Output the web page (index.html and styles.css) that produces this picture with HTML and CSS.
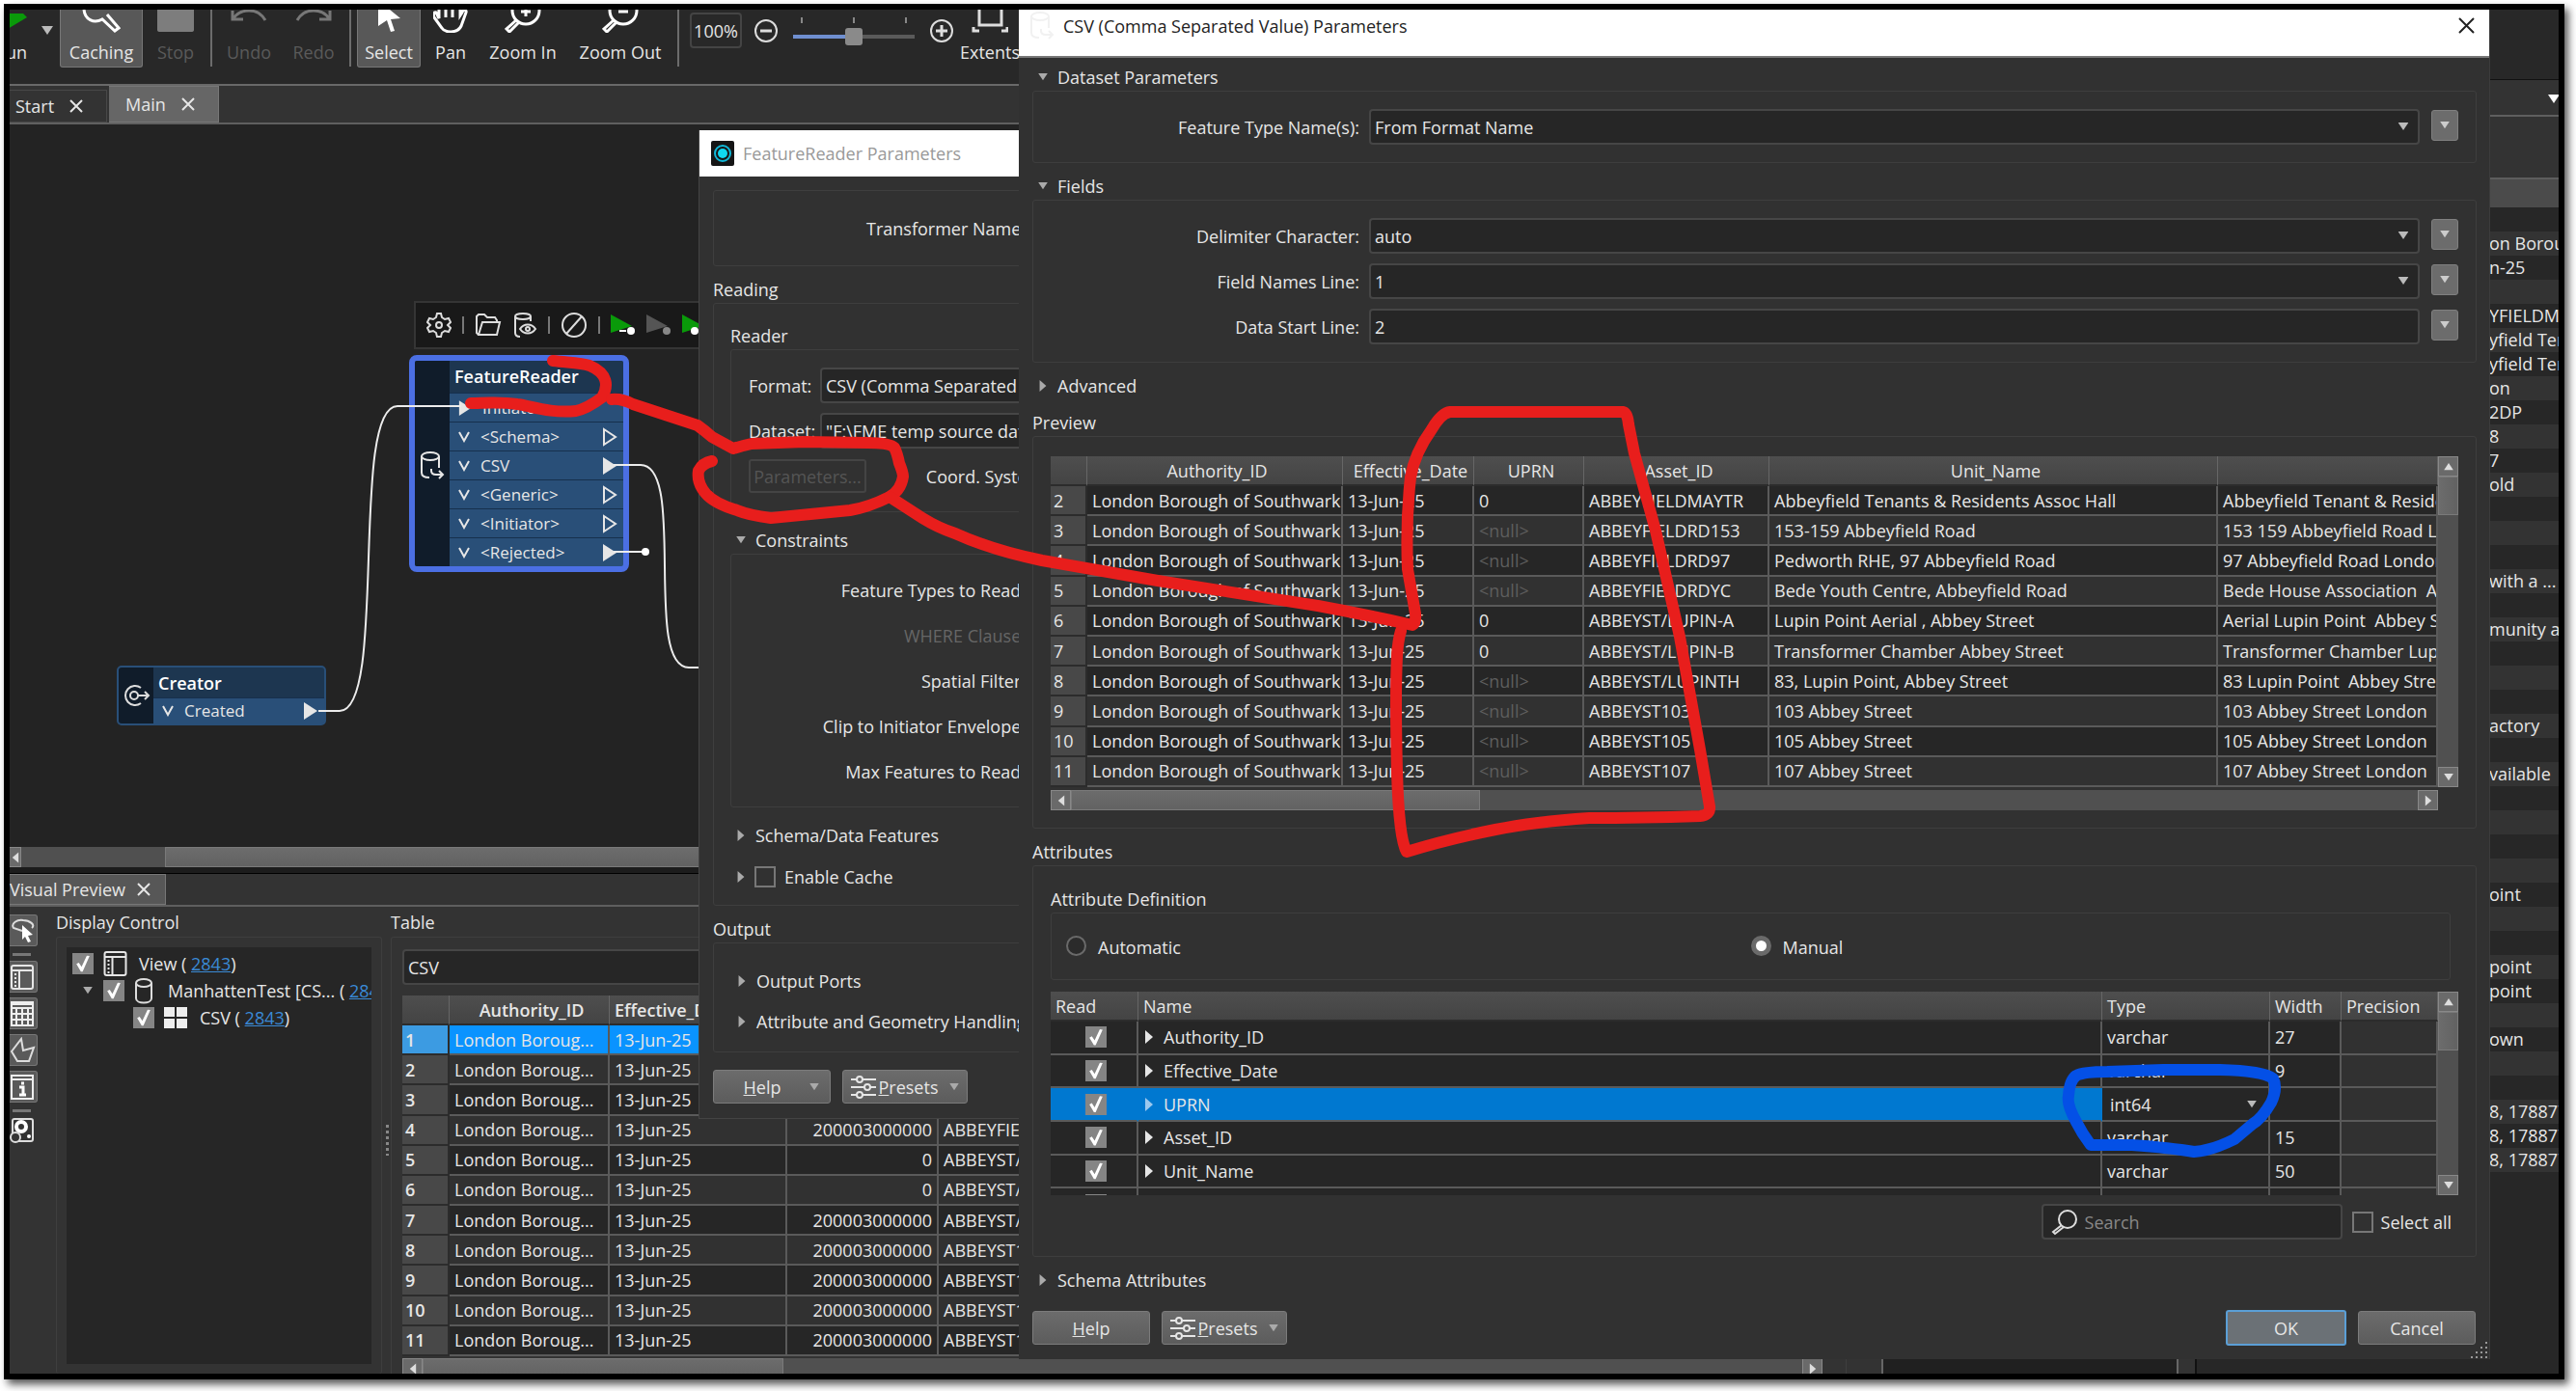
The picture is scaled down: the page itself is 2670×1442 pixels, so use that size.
FILE: index.html
```html
<!DOCTYPE html>
<html lang="en">
<head>
	<meta charset="UTF-8">
	<title>FME Workbench</title>
	<link rel="stylesheet" href="styles.css">
</head>
<body>
<svg class="defs" width="0" height="0">
	<symbol id="cross" viewBox="0 0 14 14"><path d="M1 1L13 13M13 1L1 13" fill="none" stroke="currentColor" stroke-width="2"/></symbol>
	<symbol id="down" viewBox="0 0 12 10"><path d="M0 0H12L6 9Z" fill="currentColor"/></symbol>
	<symbol id="right" viewBox="0 0 10 14"><path d="M1 0L9 7L1 14Z" fill="currentColor"/></symbol>
	<symbol id="left" viewBox="0 0 10 14"><path d="M9 0L1 7L9 14Z" fill="currentColor"/></symbol>
	<symbol id="up" viewBox="0 0 12 10"><path d="M0 9H12L6 0Z" fill="currentColor"/></symbol>
	<symbol id="chev" viewBox="0 0 12 12"><path d="M1 1L6 10L11 1" fill="none" stroke="currentColor" stroke-width="2"/></symbol>
	<symbol id="port" viewBox="0 0 16 20"><path d="M2 2L14 10L2 18Z" fill="none" stroke="currentColor" stroke-width="2"/></symbol>
	<symbol id="portfull" viewBox="0 0 16 20"><path d="M1 1L15 10L1 19Z" fill="currentColor"/></symbol>
	<symbol id="reader" viewBox="0 0 26 30"><g fill="none" stroke="currentColor" stroke-width="2"><ellipse cx="11" cy="5" rx="9" ry="4"/><path d="M2 5V22C2 25 5 27 10 27M20 5V17M12 18V20C12 23 14 24 17 24H24M20 20L24 24L20 28"/></g></symbol>
	<symbol id="sliders" viewBox="0 0 26 24"><g fill="none" stroke="currentColor" stroke-width="2"><path d="M0 4H6M12 4H26M0 12H14M20 12H26M0 20H6M12 20H26"/><circle cx="9" cy="4" r="3"/><circle cx="17" cy="12" r="3"/><circle cx="9" cy="20" r="3"/></g></symbol>
	<symbol id="view" viewBox="0 0 24 28"><g fill="none" stroke="currentColor" stroke-width="2"><rect x="1" y="2" width="22" height="24" rx="2"/><path d="M1 7H23M9 7V26M4 11H6M4 15H6M4 19H6M4 23H6"/></g></symbol>
</svg>

<div class="screen">
	<div class="workbench">
		<div class="left">
			<div class="toolbar">
				<button class="tool run"><svg width="20" height="16" viewBox="0 0 20 16"><path d="M0 0H16L20 4L0 16Z" fill="#0a9a0a"/></svg><span>Run</span></button>
				<svg class="runmenu" width="12" height="10"><use href="#down"/></svg>
				<button class="tool on caching"><svg width="40" height="24" viewBox="0 0 40 24"><g fill="none" stroke="#fff" stroke-width="3"><path d="M2 0C3 10 12 15 21 10"/><path d="M20 9L34 22L38 19L26 5"/></g></svg>Caching</button>
				<button class="tool off stop" disabled><svg width="38" height="24" viewBox="0 0 38 24"><path d="M0 0H38V21Q38 23 35 23H3Q0 23 0 21Z" fill="#7d7d7d"/></svg>Stop</button>
				<i class="sep"></i>
				<button class="tool off undo" disabled><svg width="38" height="24" viewBox="0 0 38 24"><path d="M2 1V10H13M3 9C10 -1 28 -3 36 11" fill="none" stroke="#777" stroke-width="3"/></svg>Undo</button>
				<button class="tool off redo" disabled><svg width="38" height="24" viewBox="0 0 38 24"><path d="M36 1V10H25M35 9C28 -1 10 -3 2 11" fill="none" stroke="#777" stroke-width="3"/></svg>Redo</button>
				<i class="sep"></i>
				<button class="tool on select"><svg width="26" height="24" viewBox="0 0 26 24"><path d="M2 0H14L25 9L15 10L19 22L15 23L11 11L2 17Z" fill="#fff"/></svg>Select</button>
				<button class="tool pan"><svg width="36" height="24" viewBox="0 0 36 24"><path d="M6 0V9L3 3C0 2 0 6 1 8L9 19C12 24 25 25 29 17L34 3C35 0 31 -1 30 3L28 6V0M13 0V8M20 0V8" fill="none" stroke="#fff" stroke-width="3"/></svg>Pan</button>
				<button class="tool zoomin"><svg width="38" height="24" viewBox="0 0 38 24"><g fill="none" stroke="#fff" stroke-width="3"><circle cx="22" cy="1" r="14"/><path d="M22 -4V7M17 2H27M12 11L2 20L5 23L15 13"/></g></svg>Zoom In</button>
				<button class="tool zoomout"><svg width="38" height="24" viewBox="0 0 38 24"><g fill="none" stroke="#fff" stroke-width="3"><circle cx="22" cy="1" r="14"/><path d="M17 2H27M12 11L2 20L5 23L15 13"/></g></svg>Zoom Out</button>
				<i class="sep"></i>
				<input class="percent" type="text" value="100%" aria-label="Zoom level">
				<button class="round" aria-label="Smaller"><svg width="26" height="26" viewBox="0 0 26 26"><g fill="none" stroke="#ddd" stroke-width="2"><circle cx="13" cy="13" r="11"/><path d="M7 13H19" stroke-width="3"/></g></svg></button>
				<div class="zoomer">
					<div class="ticks"><i></i><i></i><i></i></div>
					<input type="range" min="0" max="100" value="50" aria-label="Zoom">
				</div>
				<button class="round" aria-label="Larger"><svg width="26" height="26" viewBox="0 0 26 26"><g fill="none" stroke="#ddd" stroke-width="2"><circle cx="13" cy="13" r="11"/><path d="M7 13H19M13 7V19" stroke-width="3"/></g></svg></button>
				<button class="tool extents"><svg width="38" height="24" viewBox="0 0 38 24"><path d="M8 0V16H31V0M2 18V22H8M37 18V22H31" fill="none" stroke="#ddd" stroke-width="3"/></svg>Extents</button>
			</div>
			<div class="tabs">
				<button class="tab start">Start <svg width="14" height="14"><use href="#cross"/></svg></button>
				<button class="tab active">Main <svg width="14" height="14"><use href="#cross"/></svg></button>
			</div>
			<div class="canvas">
				<svg class="wires">
					<g transform="translate(-10 -129)" fill="none" stroke="#ececec" stroke-width="2">
						<path d="M330 737H352C402 737 362 421 412 421H478"/>
						<path d="M636 482H664C712 482 666 692 714 692H740"/>
						<path d="M636 572H668"/>
						<circle cx="669" cy="572" r="4" fill="#fff" stroke="none"/>
					</g>
				</svg>
				<div class="minibar">
					<svg width="26" height="28" viewBox="0 0 26 28"><g fill="none" stroke="#ddd" stroke-width="2"><path d="M11 2H15L16 6L19 8L23 7L25 11L22 14L25 17L23 21L19 20L16 22L15 26H11L10 22L7 20L3 21L1 17L4 14L1 11L3 7L7 8L10 6Z"/><circle cx="13" cy="14" r="3"/></g></svg>
					<i></i>
					<svg width="28" height="28" viewBox="0 0 28 28"><path d="M4 24L2 22V5L4 3H10L13 6H21L23 9V11M4 24L8 11H26L23 24Z" fill="none" stroke="#ddd" stroke-width="2"/></svg>
					<svg width="26" height="28" viewBox="0 0 26 28"><g fill="none" stroke="#ddd" stroke-width="2"><ellipse cx="11" cy="5" rx="8" ry="3"/><path d="M3 5V22C3 25 5 26 8 26M19 5V10M8 18C12 12 20 12 24 18C20 24 12 24 8 18Z"/><circle cx="16" cy="18" r="2"/></g></svg>
					<i></i>
					<svg width="28" height="28" viewBox="0 0 28 28"><g fill="none" stroke="#ddd" stroke-width="2"><circle cx="14" cy="14" r="12"/><path d="M22 5L6 23"/></g></svg>
					<i></i>
					<svg width="26" height="24" viewBox="0 0 26 24"><path d="M0 1L22 13L0 20Z" fill="#0a9a0a"/><path d="M9 18H16" stroke="#fff" stroke-width="2"/><circle cx="21" cy="18" r="4" fill="#fff"/></svg>
					<svg width="26" height="24" viewBox="0 0 26 24"><path d="M0 1L22 13L0 20Z" fill="#555"/><circle cx="21" cy="18" r="4" fill="#888"/></svg>
					<svg width="26" height="24" viewBox="0 0 26 24"><path d="M0 1L22 13L0 20Z" fill="#0a9a0a"/><circle cx="13" cy="18" r="4" fill="#fff"/></svg>
				</div>
				<div class="node reader">
					<div class="side"><svg width="26" height="30"><use href="#reader"/></svg></div>
					<div class="ports">
						<h3>FeatureReader</h3>
						<p class="in"><svg width="14" height="18"><use href="#portfull"/></svg><span>Initiator</span></p>
						<p><svg width="12" height="12"><use href="#chev"/></svg><span>&lt;Schema&gt;</span><svg width="16" height="20"><use href="#port"/></svg></p>
						<p><svg width="12" height="12"><use href="#chev"/></svg><span>CSV</span><svg width="16" height="20"><use href="#portfull"/></svg></p>
						<p><svg width="12" height="12"><use href="#chev"/></svg><span>&lt;Generic&gt;</span><svg width="16" height="20"><use href="#port"/></svg></p>
						<p><svg width="12" height="12"><use href="#chev"/></svg><span>&lt;Initiator&gt;</span><svg width="16" height="20"><use href="#port"/></svg></p>
						<p><svg width="12" height="12"><use href="#chev"/></svg><span>&lt;Rejected&gt;</span><svg width="16" height="20"><use href="#portfull"/></svg></p>
					</div>
				</div>
				<div class="node creator">
					<div class="side"><svg width="30" height="26" viewBox="0 0 30 26"><g fill="none" stroke="#ddd" stroke-width="2"><path d="M20 5A10 10 0 1 0 20 21"/><circle cx="13" cy="13" r="4"/><path d="M17 13H28M24 9L28 13L24 17"/></g></svg></div>
					<div class="ports">
						<h3>Creator</h3>
						<p><svg width="12" height="12"><use href="#chev"/></svg><span>Created</span><svg width="16" height="20"><use href="#portfull"/></svg></p>
					</div>
				</div>
			</div>
			<div class="hbar canvasbar"><b><svg width="8" height="12"><use href="#left"/></svg></b><i></i><em></em></div>
			<div class="preview">
				<div class="tabs low"><button class="tab active">Visual Preview <svg width="14" height="14"><use href="#cross"/></svg></button></div>
				<div class="panes">
					<div class="sidebar">
						<button aria-label="Select"><svg width="26" height="28" viewBox="0 0 26 28"><path d="M12 14L3 11C0 6 7 2 13 3C20 3 26 8 22 11" fill="none" stroke="#ddd" stroke-width="2"/><path d="M12 8L23 18L18 19L21 25L18 26L15 20L12 23Z" fill="#fff"/></svg></button>
						<i></i>
						<button aria-label="Display control"><svg width="24" height="28"><use href="#view"/></svg></button>
						<button aria-label="Table"><svg width="24" height="28" viewBox="0 0 24 28"><path d="M1 2H23V26H1ZM1 8H23M1 14H23M1 20H23M6 8V26M12 8V26M18 8V26M1 4H23" fill="none" stroke="#eee" stroke-width="2"/></svg></button>
						<button aria-label="Graphics"><svg width="26" height="28" viewBox="0 0 26 28"><path d="M11 2L13 14L24 11L19 25H7L1 15Z" fill="none" stroke="#ddd" stroke-width="2"/></svg></button>
						<button aria-label="Information"><svg width="24" height="28" viewBox="0 0 24 28"><path d="M1 2H23V26H1ZM1 6H23" fill="none" stroke="#eee" stroke-width="2"/><path d="M9 14H13V22M9 22H16M11 10H14" fill="none" stroke="#fff" stroke-width="3"/></svg></button>
						<i></i>
						<svg width="26" height="28" viewBox="0 0 26 28"><rect x="3" y="2" width="21" height="23" rx="2" fill="none" stroke="#ddd" stroke-width="2"/><circle cx="12" cy="10" r="5" fill="none" stroke="#fff" stroke-width="4"/><circle cx="6" cy="21" r="5" fill="#333" stroke="#ddd" stroke-width="2"/><circle cx="20" cy="20" r="2" fill="#fff"/></svg>
					</div>
					<div class="display">
						<h4>Display Control</h4>
						<div class="group">
							<ul class="tree">
								<li><input type="checkbox" id="t1" checked><svg width="25" height="28"><use href="#view"/></svg><label for="t1">View ( <a href="#">2843</a>)</label></li>
								<li class="l2"><svg width="12" height="8"><use href="#down"/></svg><input type="checkbox" id="t2" checked><svg width="20" height="28" viewBox="0 0 20 28"><g fill="none" stroke="#ddd" stroke-width="2"><ellipse cx="10" cy="6" rx="8" ry="4"/><path d="M2 6V22C2 28 18 28 18 22V6"/></g></svg><label for="t2">ManhattenTest [CS... ( <a href="#">2843</a>)</label></li>
								<li class="l3"><input type="checkbox" id="t3" checked><svg width="25" height="24" viewBox="0 0 25 24"><path d="M0 1H11V11H0ZM13 1H24V11H13ZM0 13H11V23H0ZM13 13H24V23H13Z" fill="#eee"/></svg><label for="t3">CSV ( <a href="#">2843</a>)</label></li>
							</ul>
						</div>
					</div>
					<div class="splitter"></div>
					<div class="tablepane">
						<h4>Table</h4>
						<div class="group">
							<select class="field" aria-label="Feature type"><option>CSV</option></select>
							<table class="grid data">
								<colgroup><col class="c49"><col class="c166"><col class="c184"><col class="c157"><col></colgroup>
								<thead><tr><th></th><th>Authority_ID</th><th class="l">Effective_Date</th><th></th><th></th></tr></thead>
								<tbody>
									<tr class="sel"><th>1</th><td>London Boroug...</td><td>13-Jun-25</td><td></td><td></td></tr>
									<tr><th>2</th><td>London Boroug...</td><td>13-Jun-25</td><td></td><td></td></tr>
									<tr><th>3</th><td>London Boroug...</td><td>13-Jun-25</td><td></td><td></td></tr>
									<tr><th>4</th><td>London Boroug...</td><td>13-Jun-25</td><td>200003000000</td><td>ABBEYFIELDRD97</td></tr>
									<tr><th>5</th><td>London Boroug...</td><td>13-Jun-25</td><td>0</td><td>ABBEYST/LUPIN-A</td></tr>
									<tr><th>6</th><td>London Boroug...</td><td>13-Jun-25</td><td>0</td><td>ABBEYST/LUPIN-B</td></tr>
									<tr><th>7</th><td>London Boroug...</td><td>13-Jun-25</td><td>200003000000</td><td>ABBEYST/LUPINTH</td></tr>
									<tr><th>8</th><td>London Boroug...</td><td>13-Jun-25</td><td>200003000000</td><td>ABBEYST103</td></tr>
									<tr><th>9</th><td>London Boroug...</td><td>13-Jun-25</td><td>200003000000</td><td>ABBEYST105</td></tr>
									<tr><th>10</th><td>London Boroug...</td><td>13-Jun-25</td><td>200003000000</td><td>ABBEYST107</td></tr>
									<tr><th>11</th><td>London Boroug...</td><td>13-Jun-25</td><td>200003000000</td><td>ABBEYST109</td></tr>
								</tbody>
							</table>
							<div class="hbar databar"><b><svg width="8" height="12"><use href="#left"/></svg></b><em></em><i></i><b><svg width="8" height="12"><use href="#right"/></svg></b></div>
						</div>
					</div>
					<div class="log"></div>
				</div>
			</div>
		</div>
		<div class="info">
			<div class="infotop"></div>
			<div class="infotab"><svg width="12" height="10"><use href="#down"/></svg></div>
			<div class="infogap"></div>
			<div class="infohead"></div>
			<ul>
				<li></li><li>on Borou</li><li>n-25</li><li></li><li>YFIELDM</li><li>yfield Ten</li><li>yfield Ten</li><li>on</li><li>2DP</li><li>8</li>
				<li>7</li><li>old</li><li></li><li></li><li></li><li>with a ...</li><li></li><li>munity as</li><li></li><li></li>
				<li></li><li>actory</li><li></li><li>vailable</li><li></li><li></li><li></li><li></li><li>oint</li><li></li>
				<li></li><li>point</li><li>point</li><li></li><li>own</li><li></li><li></li><li>8, 178877</li><li>8, 178877</li><li>8, 178877</li>
			</ul>
		</div>
	</div>

	<div class="dialog feature">
		<div class="title"><svg width="24" height="26" viewBox="0 0 24 26"><rect width="24" height="26" rx="2" fill="#151515"/><circle cx="12" cy="13" r="5" fill="#10d8f0"/><circle cx="12" cy="13" r="8" fill="none" stroke="#10b8d8" stroke-width="2"/></svg>FeatureReader Parameters</div>
		<div class="body">
			<div class="group name"><div class="row"><label for="tn">Transformer Name:</label><input class="field" id="tn" type="text" value="FeatureReader"></div></div>
			<h4>Reading</h4>
			<div class="group reading">
				<h4>Reader</h4>
				<div class="group src">
					<div class="row"><label for="fmt">Format:</label><input class="field" id="fmt" type="text" value="CSV (Comma Separated Value)"></div>
					<div class="row"><label for="ds">Dataset:</label><input class="field" id="ds" type="text" value='"F:\FME temp source data\ManhattenTest.csv"'></div>
					<div class="row"><button class="params" disabled>Parameters...</button><label class="coord" for="cs">Coord. System:</label><input class="field" id="cs" type="text"></div>
				</div>
				<h4 class="fold"><svg width="12" height="8"><use href="#down"/></svg>Constraints</h4>
				<div class="group cons">
					<div class="row"><label for="f1">Feature Types to Read:</label><input class="field" id="f1" type="text"></div>
					<div class="row dim"><label for="f2">WHERE Clause:</label><input class="field" id="f2" type="text"></div>
					<div class="row"><label for="f3">Spatial Filter:</label><input class="field" id="f3" type="text"></div>
					<div class="row"><label for="f4">Clip to Initiator Envelope:</label><input class="field" id="f4" type="text"></div>
					<div class="row"><label for="f5">Max Features to Read:</label><input class="field" id="f5" type="text"></div>
				</div>
				<h4 class="fold"><svg width="10" height="12"><use href="#right"/></svg>Schema/Data Features</h4>
				<h4 class="fold cache"><svg width="10" height="12"><use href="#right"/></svg><input type="checkbox" id="ec"><label for="ec">Enable Cache</label></h4>
			</div>
			<h4>Output</h4>
			<div class="group output">
				<h4 class="fold"><svg width="10" height="12"><use href="#right"/></svg>Output Ports</h4>
				<h4 class="fold"><svg width="10" height="12"><use href="#right"/></svg>Attribute and Geometry Handling</h4>
			</div>
			<div class="buttons">
				<button class="btn menu"><span><u>H</u>elp</span><svg width="10" height="8" viewBox="0 0 12 10"><use href="#down"/></svg></button>
				<button class="btn presets"><svg width="26" height="24"><use href="#sliders"/></svg><span><u>P</u>resets</span><svg width="10" height="8" viewBox="0 0 12 10"><use href="#down"/></svg></button>
			</div>
		</div>
	</div>

	<div class="dialog csv">
		<div class="title"><svg width="26" height="30" class="ghost"><use href="#reader"/></svg>CSV (Comma Separated Value) Parameters<button class="close" aria-label="Close"><svg width="17" height="17" viewBox="0 0 17 17"><path d="M1 1L16 16M16 1L1 16" stroke="#222" stroke-width="2"/></svg></button></div>
		<div class="body">
			<h4 class="fold first"><svg width="12" height="8"><use href="#down"/></svg>Dataset Parameters</h4>
			<div class="group">
				<div class="row"><label for="c1">Feature Type Name(s):</label><span class="combo"><select class="field" id="c1"><option>From Format Name</option></select><svg width="12" height="9" viewBox="0 0 12 10"><use href="#down"/></svg></span><button class="mini" aria-label="Options"><svg width="12" height="8"><use href="#down"/></svg></button></div>
			</div>
			<h4 class="fold"><svg width="12" height="8"><use href="#down"/></svg>Fields</h4>
			<div class="group">
				<div class="row"><label for="c2">Delimiter Character:</label><span class="combo"><select class="field" id="c2"><option>auto</option></select><svg width="12" height="9" viewBox="0 0 12 10"><use href="#down"/></svg></span><button class="mini" aria-label="Options"><svg width="12" height="8"><use href="#down"/></svg></button></div>
				<div class="row"><label for="c3">Field Names Line:</label><span class="combo"><select class="field" id="c3"><option>1</option></select><svg width="12" height="9" viewBox="0 0 12 10"><use href="#down"/></svg></span><button class="mini" aria-label="Options"><svg width="12" height="8"><use href="#down"/></svg></button></div>
				<div class="row"><label for="c4">Data Start Line:</label><span class="combo"><input class="field" id="c4" type="text" value="2"></span><button class="mini" aria-label="Options"><svg width="12" height="8"><use href="#down"/></svg></button></div>
			</div>
			<h4 class="fold"><svg width="10" height="12"><use href="#right"/></svg>Advanced</h4>
			<h4>Preview</h4>
			<div class="group previewbox">
				<div class="scroller">
					<div class="main">
						<table class="grid rows">
							<colgroup><col class="c38"><col class="c265"><col class="c136"><col class="c114"><col class="c192"><col><col class="c228"></colgroup>
							<thead><tr><th></th><th>Authority_ID</th><th>Effective_Date</th><th>UPRN</th><th>Asset_ID</th><th>Unit_Name</th><th></th></tr></thead>
							<tbody>
								<tr><th>2</th><td>London Borough of Southwark</td><td>13-Jun-25</td><td>0</td><td>ABBEYFIELDMAYTR</td><td>Abbeyfield Tenants &amp; Residents Assoc Hall</td><td>Abbeyfield Tenant &amp; Residents Hall</td></tr>
								<tr><th>3</th><td>London Borough of Southwark</td><td>13-Jun-25</td><td class="null">&lt;null&gt;</td><td>ABBEYFIELDRD153</td><td>153-159 Abbeyfield Road</td><td>153 159 Abbeyfield Road London</td></tr>
								<tr><th>4</th><td>London Borough of Southwark</td><td>13-Jun-25</td><td class="null">&lt;null&gt;</td><td>ABBEYFIELDRD97</td><td>Pedworth RHE, 97 Abbeyfield Road</td><td>97 Abbeyfield Road London</td></tr>
								<tr><th>5</th><td>London Borough of Southwark</td><td>13-Jun-25</td><td class="null">&lt;null&gt;</td><td>ABBEYFIELDRDYC</td><td>Bede Youth Centre, Abbeyfield Road</td><td>Bede House Association&nbsp; Abbeyfield</td></tr>
								<tr><th>6</th><td>London Borough of Southwark</td><td>13-Jun-25</td><td>0</td><td>ABBEYST/LUPIN-A</td><td>Lupin Point Aerial , Abbey Street</td><td>Aerial Lupin Point&nbsp; Abbey Street</td></tr>
								<tr><th>7</th><td>London Borough of Southwark</td><td>13-Jun-25</td><td>0</td><td>ABBEYST/LUPIN-B</td><td>Transformer Chamber Abbey Street</td><td>Transformer Chamber Lupin Point</td></tr>
								<tr><th>8</th><td>London Borough of Southwark</td><td>13-Jun-25</td><td class="null">&lt;null&gt;</td><td>ABBEYST/LUPINTH</td><td>83, Lupin Point, Abbey Street</td><td>83 Lupin Point&nbsp; Abbey Street London</td></tr>
								<tr><th>9</th><td>London Borough of Southwark</td><td>13-Jun-25</td><td class="null">&lt;null&gt;</td><td>ABBEYST103</td><td>103 Abbey Street</td><td>103 Abbey Street London&nbsp; SE1</td></tr>
								<tr><th>10</th><td>London Borough of Southwark</td><td>13-Jun-25</td><td class="null">&lt;null&gt;</td><td>ABBEYST105</td><td>105 Abbey Street</td><td>105 Abbey Street London&nbsp; SE1</td></tr>
								<tr><th>11</th><td>London Borough of Southwark</td><td>13-Jun-25</td><td class="null">&lt;null&gt;</td><td>ABBEYST107</td><td>107 Abbey Street</td><td>107 Abbey Street London&nbsp; SE1</td></tr>
							</tbody>
						</table>
						<div class="hbar rowbar"><b><svg width="8" height="12"><use href="#left"/></svg></b><em></em><i></i><b><svg width="8" height="12"><use href="#right"/></svg></b></div>
					</div>
					<div class="vbar short"><b><svg width="12" height="8"><use href="#up"/></svg></b><em></em><i></i><b><svg width="12" height="8"><use href="#down"/></svg></b></div>
				</div>
			</div>
			<h4>Attributes</h4>
			<div class="group attrs">
				<h4>Attribute Definition</h4>
				<div class="group radios">
					<label><input type="radio" name="def">Automatic</label>
					<label><input type="radio" name="def" checked>Manual</label>
				</div>
				<div class="scroller attrscroll">
					<div class="main">
						<table class="grid list">
							<colgroup><col class="c91"><col><col class="c174"><col class="c74"><col class="c100"></colgroup>
							<thead><tr><th>Read</th><th>Name</th><th>Type</th><th>Width</th><th>Precision</th></tr></thead>
							<tbody>
								<tr><td><input type="checkbox" checked aria-label="Authority_ID"></td><td><svg width="12" height="14"><use href="#right"/></svg>Authority_ID</td><td>varchar</td><td>27</td><td></td></tr>
								<tr><td><input type="checkbox" checked aria-label="Effective_Date"></td><td><svg width="12" height="14"><use href="#right"/></svg>Effective_Date</td><td>varchar</td><td>9</td><td></td></tr>
								<tr class="hot"><td><input type="checkbox" checked aria-label="UPRN"></td><td><svg width="12" height="14"><use href="#right"/></svg>UPRN</td><td class="pick"><span class="combo"><select aria-label="Type"><option>int64</option></select><svg width="12" height="8"><use href="#down"/></svg></span></td><td></td><td></td></tr>
								<tr><td><input type="checkbox" checked aria-label="Asset_ID"></td><td><svg width="12" height="14"><use href="#right"/></svg>Asset_ID</td><td>varchar</td><td>15</td><td></td></tr>
								<tr><td><input type="checkbox" checked aria-label="Unit_Name"></td><td><svg width="12" height="14"><use href="#right"/></svg>Unit_Name</td><td>varchar</td><td>50</td><td></td></tr>
								<tr><td><input type="checkbox" checked aria-label="Address"></td><td></td><td></td><td></td><td></td></tr>
							</tbody>
						</table>
					</div>
					<div class="vbar"><b><svg width="12" height="8"><use href="#up"/></svg></b><em></em><i></i><b><svg width="12" height="8"><use href="#down"/></svg></b></div>
				</div>
				<div class="find">
					<div class="search"><svg width="28" height="28" viewBox="0 0 28 28"><g fill="none" stroke="#ddd" stroke-width="2"><circle cx="17" cy="11" r="9"/><path d="M11 17L2 24L4 26L13 19"/></g></svg><input type="text" placeholder="Search" aria-label="Search"></div>
					<input type="checkbox" id="all"><label for="all">Select all</label>
				</div>
			</div>
			<h4 class="fold"><svg width="10" height="12"><use href="#right"/></svg>Schema Attributes</h4>
			<div class="buttons">
				<button class="btn"><span><u>H</u>elp</span></button>
				<button class="btn presets"><svg width="26" height="24"><use href="#sliders"/></svg><span><u>P</u>resets</span><svg width="10" height="8" viewBox="0 0 12 10"><use href="#down"/></svg></button>
				<span class="grow"></span>
				<button class="btn ok">OK</button>
				<button class="btn">Cancel</button>
			</div>
		</div>
		<svg class="grip" width="18" height="18" viewBox="0 0 18 18"><path d="M15 2h2M15 7h2M10 7h2M15 12h2M10 12h2M5 12h2M15 17h2M10 17h2M5 17h2M0 17h2" stroke="#999" stroke-width="2"/></svg>
	</div>

	<!-- pen marks over the windows -->
	<svg class="ink">
		<g transform="translate(-10 -10)" fill="none" stroke-width="12" stroke-linecap="round" stroke-linejoin="round">
			<g stroke="#e81e1c">
				<path d="M573 374C590 376 602 376 611 379C630 387 631 400 624 412C616 418 606 424 597 426C570 429 548 420 536 419C518 416 500 418 488 418"/>
				<path d="M634 414Q644 413 656 419L723 441Q730 446 738 453L760 465Q770 462 779 460L834 458L899 459Q922 459 927 464Q930 470 932 480Q936 490 936 494Q934 508 922 515Q900 526 881 529L799 537Q776 534 764 529Q740 522 731 511Q722 500 724 488Q728 480 738 478"/>
				<path d="M922 515L956 537Q972 547 990 553Q1030 571 1080 581L1200 602L1366 628Q1420 638 1464 648Q1468 646 1467 636L1459 590Q1457 540 1462 495Q1466 470 1484 445Q1494 428 1503 427H1682Q1687 428 1688 440L1694 470L1716 550L1741 660L1762 777L1772 836Q1773 845 1762 846Q1700 848 1647 848Q1590 852 1550 860Q1500 870 1458 883Q1450 870 1448 800Q1446 720 1448 680Q1449 664 1452 654"/>
			</g>
			<path stroke="#0450e6" d="M2184 1111L2242 1109H2301Q2345 1110 2356 1118Q2361 1128 2354 1143Q2344 1160 2335 1165L2316 1181Q2292 1193 2274 1194Q2250 1190 2210 1187H2167Q2158 1175 2152 1163Q2142 1145 2144 1136Q2145 1120 2152 1115Q2160 1111 2184 1111Z"/>
		</g>
	</svg>
</div>
</body>
</html>
```
FILE: styles.css
```css
*{
	box-sizing:border-box;
}
html,body{
	height:100%;
	margin:0;
}
body{
	background:#fff;
	overflow:hidden;
	font-family:"Open Sans","Noto Sans",sans-serif;
	font-size:18px;
	line-height:28px;
	color:#e6e6e6;
}
ul,h3,h4,p{
	margin:0;
	padding:0;
	list-style:none;
	font-size:inherit;
	font-weight:normal;
}
button,input,select{
	font:inherit;
	color:inherit;
	margin:0;
	padding:0;
	border:0;
	background:none;
}
svg{
	flex:none;
	display:block;
}
.defs{
	position:absolute;
}
.screen{
	position:relative;
	height:calc(100vh - 16px);
	margin:4px 12px 12px 4px;
	border:6px solid #000;
	background:#333;
	overflow:hidden;
}
body::before{
	content:"";
	position:absolute;
	left:8px;
	top:8px;
	right:12px;
	bottom:12px;
	box-shadow:2px 3px 8px 2px #555;
}
.workbench{
	display:flex;
	height:100%;
}
.left{
	flex:1;
	min-width:0;
	display:flex;
	flex-direction:column;
}

/* toolbar */
.toolbar{
	height:79px;
	flex:none;
	display:flex;
	align-items:flex-start;
	background:#282828;
	border-bottom:2px solid #696969;
}
.tool{
	height:60px;
	display:flex;
	flex-direction:column;
	align-items:center;
	flex:none;
	gap:6px;
	white-space:nowrap;
	border-radius:0 0 3px 3px;
}
.tool.on{
	background:#585858;
	border:1px solid #777;
	border-top:0;
}
.tool.off{
	color:#5a5a5a;
}
.run{
	width:18px;
	align-items:flex-end;
	overflow:hidden;
}
.run svg{
	height:24px;
}
.runmenu{
	margin:17px 7px 0 15px;
	color:#bbb;
}
.caching{width:86px;}
.stop{width:68px;}
.undo{width:64px;}
.redo{width:70px;}
.select{width:66px;}
.pan{width:62px;}
.zoomin{width:88px;}
.zoomout{width:114px;}
.extents{width:74px;}
.sep{
	width:2px;
	flex:none;
	height:59px;
	background:#6c6c6c;
	margin:0 6px 0 2px;
}
.percent{
	width:54px;
	height:37px;
	margin:3px 12px 0 5px;
	border:2px solid #444;
	border-radius:4px;
	text-align:center;
	flex:none;
}
.round{
	margin-top:9px;
}
.zoomer{
	width:126px;
	flex:none;
	margin:8px 15px 0;
}
.ticks{
	display:flex;
	justify-content:space-between;
	padding:0 8px;
}
.ticks i{
	width:2px;
	height:6px;
	background:#888;
}
.zoomer input{
	-webkit-appearance:none;
	display:block;
	width:126px;
	height:4px;
	margin-top:12px;
	background:linear-gradient(to right,#6f8fd0 50%,#5a5a5a 50%);
}
.zoomer input::-webkit-slider-thumb{
	-webkit-appearance:none;
	width:18px;
	height:18px;
	border-radius:3px;
	background:#8a8a8a;
}

/* tabs */
.tabs{
	height:40px;
	flex:none;
	display:flex;
	align-items:flex-end;
	gap:2px;
	background:#333;
	border-bottom:2px solid #5f5f5f;
}
.tab{
	display:flex;
	align-items:center;
	gap:16px;
	height:34px;
	padding:0 24px 0 6px;
	border:1px solid #484848;
	border-left:0;
}
.tab.active{
	height:38px;
	padding:0 24px 0 17px;
	background:#666;
	border-color:#777;
}
.tabs.low{
	height:34px;
}
.low .tab.active{
	height:32px;
	padding:0 15px 0 0;
	gap:12px;
	background:#575757;
}

/* canvas */
.canvas{
	position:relative;
	z-index:0;
	flex:1;
	background:#232323;
	overflow:hidden;
}
.wires{
	position:absolute;
	width:100%;
	height:100%;
	z-index:2;
}
.minibar{
	position:absolute;
	left:419px;
	top:183px;
	width:400px;
	height:50px;
	display:flex;
	align-items:center;
	gap:11px;
	padding-left:11px;
	background:#191919;
	border:2px solid #353535;
}
.minibar i{
	width:2px;
	height:18px;
	background:#777;
}
.node{
	position:absolute;
	display:flex;
	overflow:hidden;
	background:#294f78;
}
.node.reader{
	left:414px;
	top:239px;
	width:228px;
	border:6px solid #4b6fe3;
	border-radius:8px;
}
.node.creator{
	left:111px;
	top:561px;
	width:217px;
	border:2px solid #294f78;
	border-radius:5px;
}
.side{
	width:36px;
	display:flex;
	align-items:center;
	justify-content:center;
	background:#101c2a;
}
.reader .side{
	padding-top:4px;
}
.ports{
	flex:1;
}
.ports h3{
	height:33px;
	line-height:32px;
	padding-left:5px;
	font-weight:600;
	background:#1d3650;
	color:#fff;
}
.ports p{
	display:flex;
	align-items:center;
	height:30px;
	padding:0 6px 0 9px;
	font-size:17px;
	border-top:1px solid #16304d;
}
.ports span{
	flex:1;
	padding-left:11px;
}
.creator p{
	height:27px;
}
.creator h3{
	height:31px;
}

/* scroll bars */
.hbar,.vbar{
	display:flex;
	background:#505050;
}
.hbar{
	height:21px;
	flex:none;
}
.vbar{
	width:21px;
	flex:none;
	flex-direction:column;
}
.hbar b,.vbar b{
	flex:none;
	display:flex;
	align-items:center;
	justify-content:center;
	width:21px;
	height:21px;
	background:#6a6a6a;
	border:1px solid #888;
	color:#ddd;
}
.hbar em{
	background:linear-gradient(#6c6c6c,#626262);
	border:1px solid #7a7a7a;
}
.vbar em{
	height:40px;
	background:linear-gradient(to right,#6c6c6c,#626262);
	border:1px solid #7a7a7a;
}
.vbar i,.hbar i{
	flex:1;
}
.vbar.short{
	margin-bottom:24px;
}
.canvasbar b{
	width:12px;
	border-left:0;
}
.canvasbar i{
	flex:none;
	width:149px;
}
.canvasbar em{
	flex:1;
}
.rowbar em{
	width:424px;
}
.rowbar{
	margin-top:3px;
}
.databar{
	margin-top:2px;
}
.databar em{
	width:374px;
}

/* visual preview */
.preview{
	height:525px;
	flex:none;
	display:flex;
	flex-direction:column;
	border-top:6px solid #1c1c1c;
	box-shadow:inset 0 2px 0 #000;
	padding-top:1px;
	background:#333;
}
.panes{
	flex:1;
	display:flex;
	min-height:0;
}
.panes h4{
	height:31px;
	line-height:32px;
}
.sidebar{
	width:48px;
	display:flex;
	flex-direction:column;
	align-items:flex-start;
	gap:5px;
	padding-top:8px;
}
.sidebar button{
	width:29px;
	height:33px;
	display:flex;
	align-items:center;
	padding-left:1px;
	background:#5a5a5a;
	border:1px solid #777;
	border-left:0;
	border-radius:0 3px 3px 0;
}
.sidebar i{
	width:19px;
	height:3px;
	margin:2px 3px 0;
	background:#777;
}
.display{
	width:338px;
	display:flex;
	flex-direction:column;
}
.display .group{
	flex:1;
	padding:10px;
	border-bottom:0;
}
.tree{
	height:100%;
	padding:3px 0 0 6px;
	background:#262626;
	overflow:hidden;
}
.tree li{
	display:flex;
	align-items:center;
	height:28px;
	gap:10px;
	white-space:nowrap;
}
.tree a{
	color:#3a8ad6;
}
.tree .l2{
	padding-left:10px;
}
.tree .l2 > svg:first-child{
	color:#aaa;
}
.tree .l2 label{
	padding-left:5px;
}
.tree .l3{
	padding-left:63px;
}
.tree li label{
	padding-left:2px;
}
.splitter{
	align-self:center;
	width:3px;
	height:32px;
	margin:0 2px 0 4px;
	background:repeating-linear-gradient(#888 0 3px,transparent 3px 6px);
}
.tablepane{
	flex:1;
	min-width:0;
}
.tablepane .group{
	padding:12px 24px 0 11px;
	border-bottom:0;
}
.tablepane .field{
	width:100%;
	margin-bottom:11px;
}
.log{
	width:308px;
	margin:0 17px 0 36px;
	background:#202020;
	border:solid #666;
	border-width:0 2px;
}

/* feature information */
.info{
	width:377px;
	background:#272727;
	border-left:2px solid #111;
	overflow:hidden;
}
.infotop{
	height:73px;
	background:#282828;
	border-bottom:1px solid #111;
}
.infotab{
	height:38px;
	display:flex;
	justify-content:flex-end;
	padding:15px 0 0;
	background:#333;
	border-bottom:2px solid #5f5f5f;
}
.infotab svg{
	margin-right:-1px;
	color:#fff;
}
.infogap{
	height:63px;
	background:#333;
}
.infohead{
	height:31px;
	background:#4b4b4b;
	border-top:2px solid #5d5d5d;
}
.info li{
	height:25px;
	line-height:25px;
	padding-left:303px;
	white-space:nowrap;
}
.info li:nth-child(even){
	background:#333;
}

/* windows */
.dialog{
	position:absolute;
	background:#313131;
}
.feature{
	left:714px;
	top:125px;
	width:900px;
	border:1px solid #444;
	border-top:0;
}
.csv{
	left:1046px;
	top:0;
	right:71px;
	bottom:15px;
	border-right:1px solid #3c3c3c;
	background:#313131;
}
.title{
	display:flex;
	align-items:center;
	height:48px;
	padding:0 15px 0 12px;
	gap:9px;
	background:#fff;
	color:#999;
}
.csv .title{
	height:50px;
	padding:0 15px 15px 11px;
	color:#222;
	border-bottom:2px solid #777;
}
.ghost{
	color:#f1f1f1;
}
.close{
	margin-left:auto;
}
.body{
	padding:0 14px;
}
.body h4{
	height:28px;
	margin-top:10px;
	white-space:nowrap;
}
.fold{
	display:flex;
	align-items:center;
	gap:9px;
	padding-left:5px;
}
.fold svg{
	color:#aaa;
	width:12px;
}
.body .first{
	margin-top:6px;
}
.group{
	padding:18px;
	border:1px solid #3e3e3e;
	border-radius:3px;
}
.row{
	display:flex;
	align-items:center;
	height:37px;
	white-space:nowrap;
}
.row + .row{
	margin-top:10px;
}
.row label{
	text-align:right;
	margin-right:10px;
	flex:none;
}
.field{
	-webkit-appearance:none;
	display:block;
	width:100%;
	height:37px;
	padding:0 4px;
	background:#262626;
	border:2px solid #464646;
	border-radius:4px;
}
.combo{
	position:relative;
	flex:1;
}
.combo svg{
	position:absolute;
	right:11px;
	top:14px;
	color:#bbb;
}
.mini{
	width:28px;
	height:32px;
	margin:0 0 4px 12px;
	display:flex;
	align-items:center;
	justify-content:center;
	background:#6c6c6c;
	border:1px solid #808080;
	border-radius:3px;
	color:#ccc;
}
.csv .row label{
	width:320px;
}
.csv .group{
	margin-right:-1px;
}
.feature .name{
	margin-top:14px;
	padding:20px;
}
.name .row label{
	width:303px;
}
.reading{
	padding:9px 17px 15px;
}
.src .row label{
	width:64px;
}
.feature .src .coord{
	width:166px;
	margin-left:22px;
}
.cons .row label{
	width:287px;
}
.dim label{
	color:#666;
}
.params{
	width:122px;
	height:35px;
	border:2px solid #444;
	border-radius:3px;
	color:#555;
	flex:none;
}
.reading .fold{
	margin-top:15px;
}
.cache input{
	margin-left:-1px;
}
.output{
	padding:15px 18px 17px;
}
.output .fold + .fold{
	margin-top:14px;
}
.buttons{
	display:flex;
	gap:12px;
	padding:18px 0 15px;
}
.btn{
	display:flex;
	align-items:center;
	justify-content:center;
	width:122px;
	height:35px;
	background:linear-gradient(#6c6c6c,#5c5c5c);
	border:1px solid #7c7c7c;
	border-radius:3px;
}
.btn.presets{
	width:130px;
	gap:3px;
}
.btn.presets svg:last-child{
	margin-left:9px;
	color:#aaa;
}
.btn.menu{
	gap:30px;
	padding-left:20px;
}
.btn.menu svg{
	color:#aaa;
}
.btn.ok{
	width:125px;
	height:37px;
	margin:-1px 0;
	background:#6b7176;
	border:2px solid #5b9fd6;
}
.grow{
	flex:1;
}
.grip{
	position:absolute;
	right:1px;
	bottom:1px;
}

/* check boxes and radios */
input[type=checkbox]{
	-webkit-appearance:none;
	width:22px;
	height:22px;
	flex:none;
	border:2px solid #777;
}
input[type=checkbox]:checked{
	background:#858585;
	border-color:#858585;
}
input[type=checkbox]:checked::before{
	content:"";
	display:block;
	width:18px;
	height:18px;
	background:#fff;
	clip-path:polygon(12% 52%,26% 44%,42% 68%,72% 4%,88% 6%,48% 96%,38% 96%);
}
input[type=radio]{
	-webkit-appearance:none;
	width:21px;
	height:21px;
	margin:0 12px 4px 0;
	border:2px solid #6a6a6a;
	border-radius:50%;
	background:#2b2b2b;
}
input[type=radio]:checked{
	border:5px solid #6a6a6a;
	background:#fff;
}

/* tables */
.grid{
	width:100%;
	table-layout:fixed;
	border-collapse:separate;
	border-spacing:0;
	line-height:24px;
}
.grid th,.grid td{
	padding:0 0 0 5px;
	overflow:hidden;
	white-space:nowrap;
	font-weight:normal;
	text-align:left;
	border-right:2px solid #5a5a5a;
	border-bottom:2px solid #5a5a5a;
}
.grid th{
	background:#484848;
	border-color:#2c2c2c;
}
.grid thead th{
	height:31px;
	text-align:center;
	background:linear-gradient(#4e4e4e,#444);
	border-right:1px solid #666;
}
.grid tbody th{
	padding:0 3px;
}
.grid td{
	background:#262626;
}
.grid tr:nth-child(even) td{
	background:#313131;
}
.grid .null{
	color:#5e5e5e;
}
.c38{width:38px;}
.c49{width:49px;}
.c74{width:74px;}
.c91{width:91px;}
.c100{width:100px;}
.c114{width:114px;}
.c136{width:136px;}
.c157{width:157px;}
.c166{width:166px;}
.c174{width:174px;}
.c184{width:184px;}
.c192{width:192px;}
.c228{width:228px;}
.c265{width:265px;}
.data{
	height:374px;
}
.data th{
	font-weight:600;
}
.grid.data th{
	font-weight:600;
}
.grid.data thead .l{
	text-align:left;
}
.grid.data td:nth-child(4){
	text-align:right;
}
.grid.data td:nth-child(4){
	padding-right:5px;
}
.grid.data .sel td{
	background:#0a93ff;
}
.grid.data .sel th{
	background:#3c9be2;
}
.rows{
	height:343px;
}
.previewbox,.attrs{
	padding:20px 18px 18px;
}
.scroller{
	display:flex;
}
.scroller .main{
	flex:1;
	min-width:0;
}
.attrs{
	padding-top:10px;
	padding-bottom:17px;
}
.radios{
	display:flex;
	align-items:center;
	height:70px;
	padding:2px 15px 0;
}
.csv .attrs .radios{
	margin-right:8px;
}
.radios label{
	flex:1;
	display:flex;
	align-items:center;
}
.attrscroll{
	height:211px;
	margin-top:12px;
	overflow:hidden;
}
.list{
	height:239px;
}
.grid.list tbody td{
	height:34px;
}
.grid.list thead th{
	text-align:left;
}
.grid.list tr td{
	background:#262626;
}
.grid.list tr td:last-child{
	background:#313131;
}
.grid.list td:first-child{
	text-align:center;
}
.list td input{
	display:block;
	margin:0 auto;
}
.list td svg{
	display:inline-block;
	margin-right:9px;
}
.grid.list .hot td:nth-child(-n+2){
	background:#0078d0;
	border-right-color:#0078d0;
}
.hot > td > svg{
	color:#9cc8ee;
}
.grid .pick{
	padding:0;
}
.pick .combo{
	display:block;
}
.pick select{
	-webkit-appearance:none;
	display:block;
	width:100%;
	height:30px;
	padding:0 8px;
}
.pick .combo svg{
	margin:0;
	top:11px;
}
.find{
	display:flex;
	align-items:center;
	justify-content:flex-end;
	margin:9px 7px 0 0;
}
.search{
	display:flex;
	align-items:center;
	gap:7px;
	width:312px;
	height:37px;
	margin-right:10px;
	padding:0 8px;
	background:#262626;
	border:2px solid #464646;
	border-radius:4px;
}
.search input{
	flex:1;
	min-width:0;
}
.search input::placeholder{
	color:#888;
}
.find label{
	margin-left:8px;
}
.ink{
	position:absolute;
	left:0;
	top:0;
	width:100%;
	height:100%;
	pointer-events:none;
}
```
